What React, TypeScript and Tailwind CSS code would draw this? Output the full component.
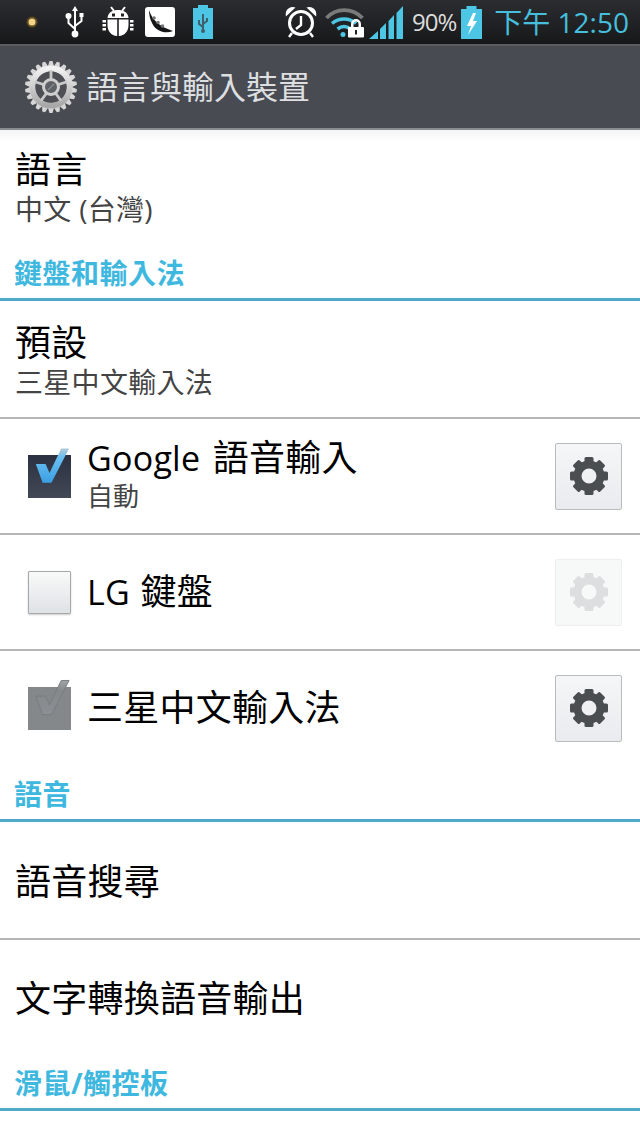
import type { ReactNode } from "react";

const cjk = "font-['Open_Sans','Noto_Sans_CJK_TC',sans-serif]";

function GearSmall({ className }: { className: string }) {
  // eight tooth cog with a round hole
  const teeth = [0, 45, 90, 135, 180, 225, 270, 315];
  return (
    <svg viewBox="0 0 40 40" className={className}>
      {teeth.map((angle) => (
        <rect
          key={angle}
          x="15.5"
          y="1"
          width="9"
          height="10"
          rx="1.5"
          fill="currentColor"
          transform={`rotate(${angle} 20 20)`}
        />
      ))}
      <circle cx="20" cy="20" r="11.5" fill="none" stroke="currentColor" strokeWidth="8" />
    </svg>
  );
}

function SettingsLogo() {
  const teeth = Array.from({ length: 22 }, (_, i) => (i * 360) / 22);
  return (
    <svg viewBox="0 0 54 54" className="h-[54px] w-[54px] shrink-0">
      <defs>
        <linearGradient id="steel" x1="0" y1="0" x2="0" y2="1">
          <stop offset="0" stopColor="#f2f2f2" />
          <stop offset="1" stopColor="#a8a8a8" />
        </linearGradient>
      </defs>
      {teeth.map((angle) => (
        <polygon
          key={angle}
          points="25.5,1 28.5,1 30.6,8 23.4,8"
          fill="#d6d6d6"
          transform={`rotate(${angle} 27 27)`}
        />
      ))}
      <circle cx="27" cy="27" r="18.500" fill="none" stroke="url(#steel)" strokeWidth="6" />
      <circle cx="27" cy="27" r="15.500" fill="#4d4f54" />
      {[0, 72, 144, 216, 288].map((angle) => (
        <rect
          key={angle}
          x="25.600"
          y="10"
          width="2.800"
          height="12"
          fill="#c9c9c9"
          transform={`rotate(${angle} 27 27)`}
        />
      ))}
      <circle cx="27" cy="27" r="7.500" fill="#5e6166" stroke="#cfcfcf" strokeWidth="3" />
      <path d="M24 30l6-6" stroke="#85888c" strokeWidth="1.500" />
    </svg>
  );
}

function StatusIcons() {
  return (
    <>
      <svg viewBox="0 0 12 12" className="ml-[26px] h-3 w-3">
        <circle cx="6" cy="6" r="5.500" fill="#7a5a1c" opacity="0.7" />
        <circle cx="6" cy="6" r="3.500" fill="#f0d488" />
      </svg>
      {/* usb */}
      <svg viewBox="0 0 20 32" className="ml-[27px] h-[32px] w-[20px]" fill="none" stroke="#fff" strokeWidth="2">
        <path d="M10 3v26M10 23 3.500 17v-5M10 20l6.500-5v-4" />
        <circle cx="10" cy="28" r="2.400" fill="#fff" />
        <circle cx="3.500" cy="10" r="2" fill="#fff" />
        <rect x="14.500" y="7" width="4" height="4" fill="#fff" stroke="none" />
        <path d="M10 0l3 5H7z" fill="#fff" stroke="none" />
      </svg>
      {/* debugging bug */}
      <svg viewBox="0 0 32 32" className="ml-[17px] h-[32px] w-[32px]" fill="#fff">
        <path d="M9 1l3 4M23 1l-3 4" stroke="#fff" strokeWidth="2" />
        <path d="M5.500 12C6 6 11 4 16 4s10 2 10.500 8z" />
        <path d="M5.500 13.500h9.700V30C9 29.500 5.500 25 5.500 19zM16.800 13.500h9.700V19c0 6-3.500 10.500-9.700 11z" />
        <rect x="0.500" y="14" width="3.500" height="2.500" />
        <rect x="0.500" y="18" width="3.500" height="2.500" />
        <rect x="0.500" y="22" width="3.500" height="2.500" />
        <rect x="28" y="14" width="3.500" height="2.500" />
        <rect x="28" y="18" width="3.500" height="2.500" />
        <rect x="28" y="22" width="3.500" height="2.500" />
        <rect x="10" y="7.500" width="3" height="3" fill="#222" />
        <rect x="19" y="7.500" width="3" height="3" fill="#222" />
      </svg>
      {/* pea pod app */}
      <svg viewBox="0 0 30 30" className="ml-[11px] h-[30px] w-[30px]">
        <rect width="30" height="30" rx="3" fill="#fff" />
        <path d="M4 3c3 10 11 17 24 21-7 3-17 1-21-8C5 12 4 8 4 3z" fill="#151618" />
        <circle cx="9" cy="11" r="1.800" fill="#777" />
        <circle cx="13" cy="15.500" r="1.800" fill="#777" />
        <circle cx="17.500" cy="19" r="1.800" fill="#777" />
      </svg>
      {/* usb storage badge */}
      <svg viewBox="0 0 20 34" className="ml-[18px] h-[34px] w-[20px]">
        <rect x="5" y="0" width="10" height="3" fill="#4cc6e4" />
        <rect x="0" y="3" width="20" height="31" fill="#4cc6e4" />
        <path d="M10 9v17M10 22l-4-3v-4M10 19l4-3v-3" fill="none" stroke="#3f5f6b" strokeWidth="2" />
        <circle cx="10" cy="26" r="2" fill="#3f5f6b" />
      </svg>
    </>
  );
}

function StatusRight() {
  return (
    <div className="mr-[11px] flex items-center">
      {/* alarm clock */}
      <svg viewBox="0 0 32 32" className="h-[32px] w-[32px]" fill="none" stroke="#fff">
        <circle cx="16" cy="17" r="11.500" strokeWidth="3" />
        <path d="M16 10v9l-5 4" strokeWidth="2.400" />
        <path d="M1.500 9C1 4 5 1 9 2zM30.500 9C31 4 27 1 23 2z" fill="#fff" strokeWidth="1.500" />
        <path d="M7 27l-3 4M25 27l3 4" strokeWidth="2.400" />
      </svg>
      {/* wifi with lock */}
      <svg viewBox="0 0 42 32" className="ml-[8px] h-[32px] w-[42px]" fill="none">
        <path d="M1.500 12C11 1.500 27 1.500 37.500 12" stroke="#7a7a7a" strokeWidth="3.800" />
        <path d="M7 17.500c7-6 17-6 24 0" stroke="#4cc6e4" strokeWidth="3.500" />
        <path d="M12.500 23c4-3 9-3 13 0" stroke="#4cc6e4" strokeWidth="3.500" />
        <circle cx="18" cy="28.500" r="2.500" fill="#4cc6e4" />
        <path d="M26 21v-3a5 5 0 0 1 10 0v3h-2.500v-3a2.500 2.500 0 0 0-5 0v3z" fill="#fff" />
        <rect x="23" y="21" width="16" height="10.500" rx="1" fill="#fff" />
        <rect x="30" y="24" width="2" height="4.500" fill="#222" />
      </svg>
      {/* signal bars */}
      <svg viewBox="0 0 34 33" className="ml-[2px] h-[33px] w-[34px]" fill="#4cc6e4">
        <polygon points="0,33 9,33 9,25" />
        <polygon points="11,33 17,33 17,17 11,23" />
        <polygon points="19.500,33 25,33 25,9 19.500,15" />
        <polygon points="27.500,33 34,33 34,0 27.500,7" />
      </svg>
      <span className={`ml-[9px] text-[24px] leading-none tracking-[-1px] text-[#dcdcdc] ${cjk}`}>90%</span>
      {/* charging battery */}
      <svg viewBox="0 0 21 33" className="ml-[5px] h-[33px] w-[21px]">
        <rect x="5.500" y="0" width="10" height="3" fill="#4cc6e4" />
        <rect x="0" y="3" width="21" height="30" fill="#4cc6e4" />
        <polygon points="12,7 6,20 10,20 7,29 16,15 12,15 15,7" fill="#fff" />
      </svg>
      <span className={`ml-[12px] text-[28px] leading-none text-[#45bfdc] ${cjk}`}>下午 12:50</span>
    </div>
  );
}

function Divider() {
  return <div className="h-[2px] shrink-0 bg-[#b4b6b8]" />;
}

function SectionHeader({ children, height }: { children: ReactNode; height: string }) {
  return (
    <div className={`flex shrink-0 flex-col justify-end ${height}`}>
      <div className="px-[14px] pb-[6px] text-[28px] font-bold leading-[38px] tracking-[0.5px] text-[#3fb8e0]">{children}</div>
      <div className="h-[3px] shrink-0 bg-[#4faac8]" />
    </div>
  );
}

function Checkbox({ state }: { state: "on" | "off" | "locked" }) {
  if (state === "off") {
    return (
      <div className="h-[43px] w-[43px] rounded-[1px] border border-[#a5a7a8] bg-gradient-to-b from-[#f8f9f9] to-[#dfe2e5] shadow-[0_1px_2px_rgba(0,0,0,0.2)]" />
    );
  }
  const box = state === "on" ? "bg-gradient-to-b from-[#2b3140] to-[#424856]" : "bg-[#85888b]";
  return (
    <div className={`relative h-[43px] w-[43px] ${box}`}>
      <svg viewBox="0 0 44 58" className="absolute bottom-0 left-0 h-[58px] w-[43px]">
        <defs>
          <linearGradient id="tick" x1="0" y1="0" x2="0" y2="1">
            <stop offset="0" stopColor="#b4c8d4" />
            <stop offset="0.25" stopColor="#6cc0f0" />
            <stop offset="1" stopColor="#3a9fe4" />
          </linearGradient>
          <linearGradient id="tickMuted" x1="0" y1="0" x2="0" y2="1">
            <stop offset="0" stopColor="#a2a5a8" />
            <stop offset="0.3" stopColor="#85888b" />
            <stop offset="1" stopColor="#8c8f93" />
          </linearGradient>
        </defs>
        {state === "on" ? (
          <path d="M8 24h10l4 9L34 8h8L24 43h-9z" fill="url(#tick)" />
        ) : (
          <path d="M8 24h10l4 9L34 8h8L24 43h-9z" fill="url(#tickMuted)" stroke="#797c80" strokeWidth="1" />
        )}
      </svg>
    </div>
  );
}

function GearButton({ disabled }: { disabled?: boolean }) {
  return (
    <div
      className={`flex h-[67px] w-[67px] items-center justify-center rounded-[2px] border ${
        disabled ? "border-[#eeeeee] bg-[#f7f8f8]" : "border-[#b9bcbf] bg-gradient-to-b from-[#f5f6f7] to-[#e9ebee]"
      }`}
    >
      <GearSmall className={`h-[40px] w-[40px] ${disabled ? "text-[#dcdedf]" : "text-[#4a4e50]"}`} />
    </div>
  );
}

function ImeRow({ state, title, sub, disabled }: { state: "on" | "off" | "locked"; title: ReactNode; sub?: string; disabled?: boolean }) {
  return (
    <div className="flex h-[114px] shrink-0 items-center pl-[28px] pr-[18px]">
      <Checkbox state={state} />
      <div className={`ml-[16px] flex-1 ${sub ? "pb-[4px]" : ""}`}>
        <p className="text-[36px] leading-[44px] tracking-[0.25px] text-black">{title}</p>
        {sub && <p className="text-[26px] leading-[32px] text-[#444]">{sub}</p>}
      </div>
      <GearButton disabled={disabled} />
    </div>
  );
}

export default function App() {
  return (
    <div className={`flex h-[1138px] w-[640px] flex-col overflow-hidden bg-white ${cjk}`}>
      <div className="flex h-[44px] shrink-0 items-center justify-between bg-gradient-to-b from-[#2c2d30] to-[#17181a]">
        <div className="flex items-center">
          <StatusIcons />
        </div>
        <StatusRight />
      </div>

      <div className="flex h-[86px] shrink-0 items-center border-t-2 border-b-2 border-t-[#5a5c60] border-b-[#8a8d90] bg-[#484b52] pl-[24px]">
        <SettingsLogo />
        <span className="ml-[8px] text-[32px] leading-none text-[#dedfe0]">語言與輸入裝置</span>
      </div>

      <div className="h-[94px] shrink-0 bg-gradient-to-b from-[#f4f4f4] to-white to-[12px] px-[15px] pt-[18px]">
        <p className="text-[36px] leading-[44px] tracking-[0.25px] text-black">語言</p>
        <p className="text-[28px] leading-[34px] tracking-[0.3px] text-[#444]">中文 (台灣)</p>
      </div>

      <SectionHeader height="h-[77px]">鍵盤和輸入法</SectionHeader>

      <div className="h-[116px] shrink-0 px-[15px] pt-[20px]">
        <p className="text-[36px] leading-[44px] tracking-[0.25px] text-black">預設</p>
        <p className="text-[28px] leading-[34px] tracking-[0.3px] text-[#444]">三星中文輸入法</p>
      </div>
      <Divider />
      <ImeRow
        state="on"
        title={
          <>
            <span className="mr-[3px] text-[34px]">Google</span> 語音輸入
          </>
        }
        sub="自動"
      />
      <Divider />
      <ImeRow
        state="off"
        title={
          <>
            <span className="mr-[1px] text-[34px]">LG</span> 鍵盤
          </>
        }
        disabled
      />
      <Divider />
      <ImeRow state="locked" title="三星中文輸入法" />

      <SectionHeader height="h-[57px]">語音</SectionHeader>

      <div className="flex h-[116px] shrink-0 items-center px-[15px] pt-[4px] text-[36px] tracking-[0.25px] text-black">語音搜尋</div>
      <Divider />
      <div className="flex h-[116px] shrink-0 items-center px-[15px] pt-[2px] text-[36px] tracking-[0.25px] text-black">文字轉換語音輸出</div>

      <SectionHeader height="h-[55px]">滑鼠/觸控板</SectionHeader>
    </div>
  );
}
